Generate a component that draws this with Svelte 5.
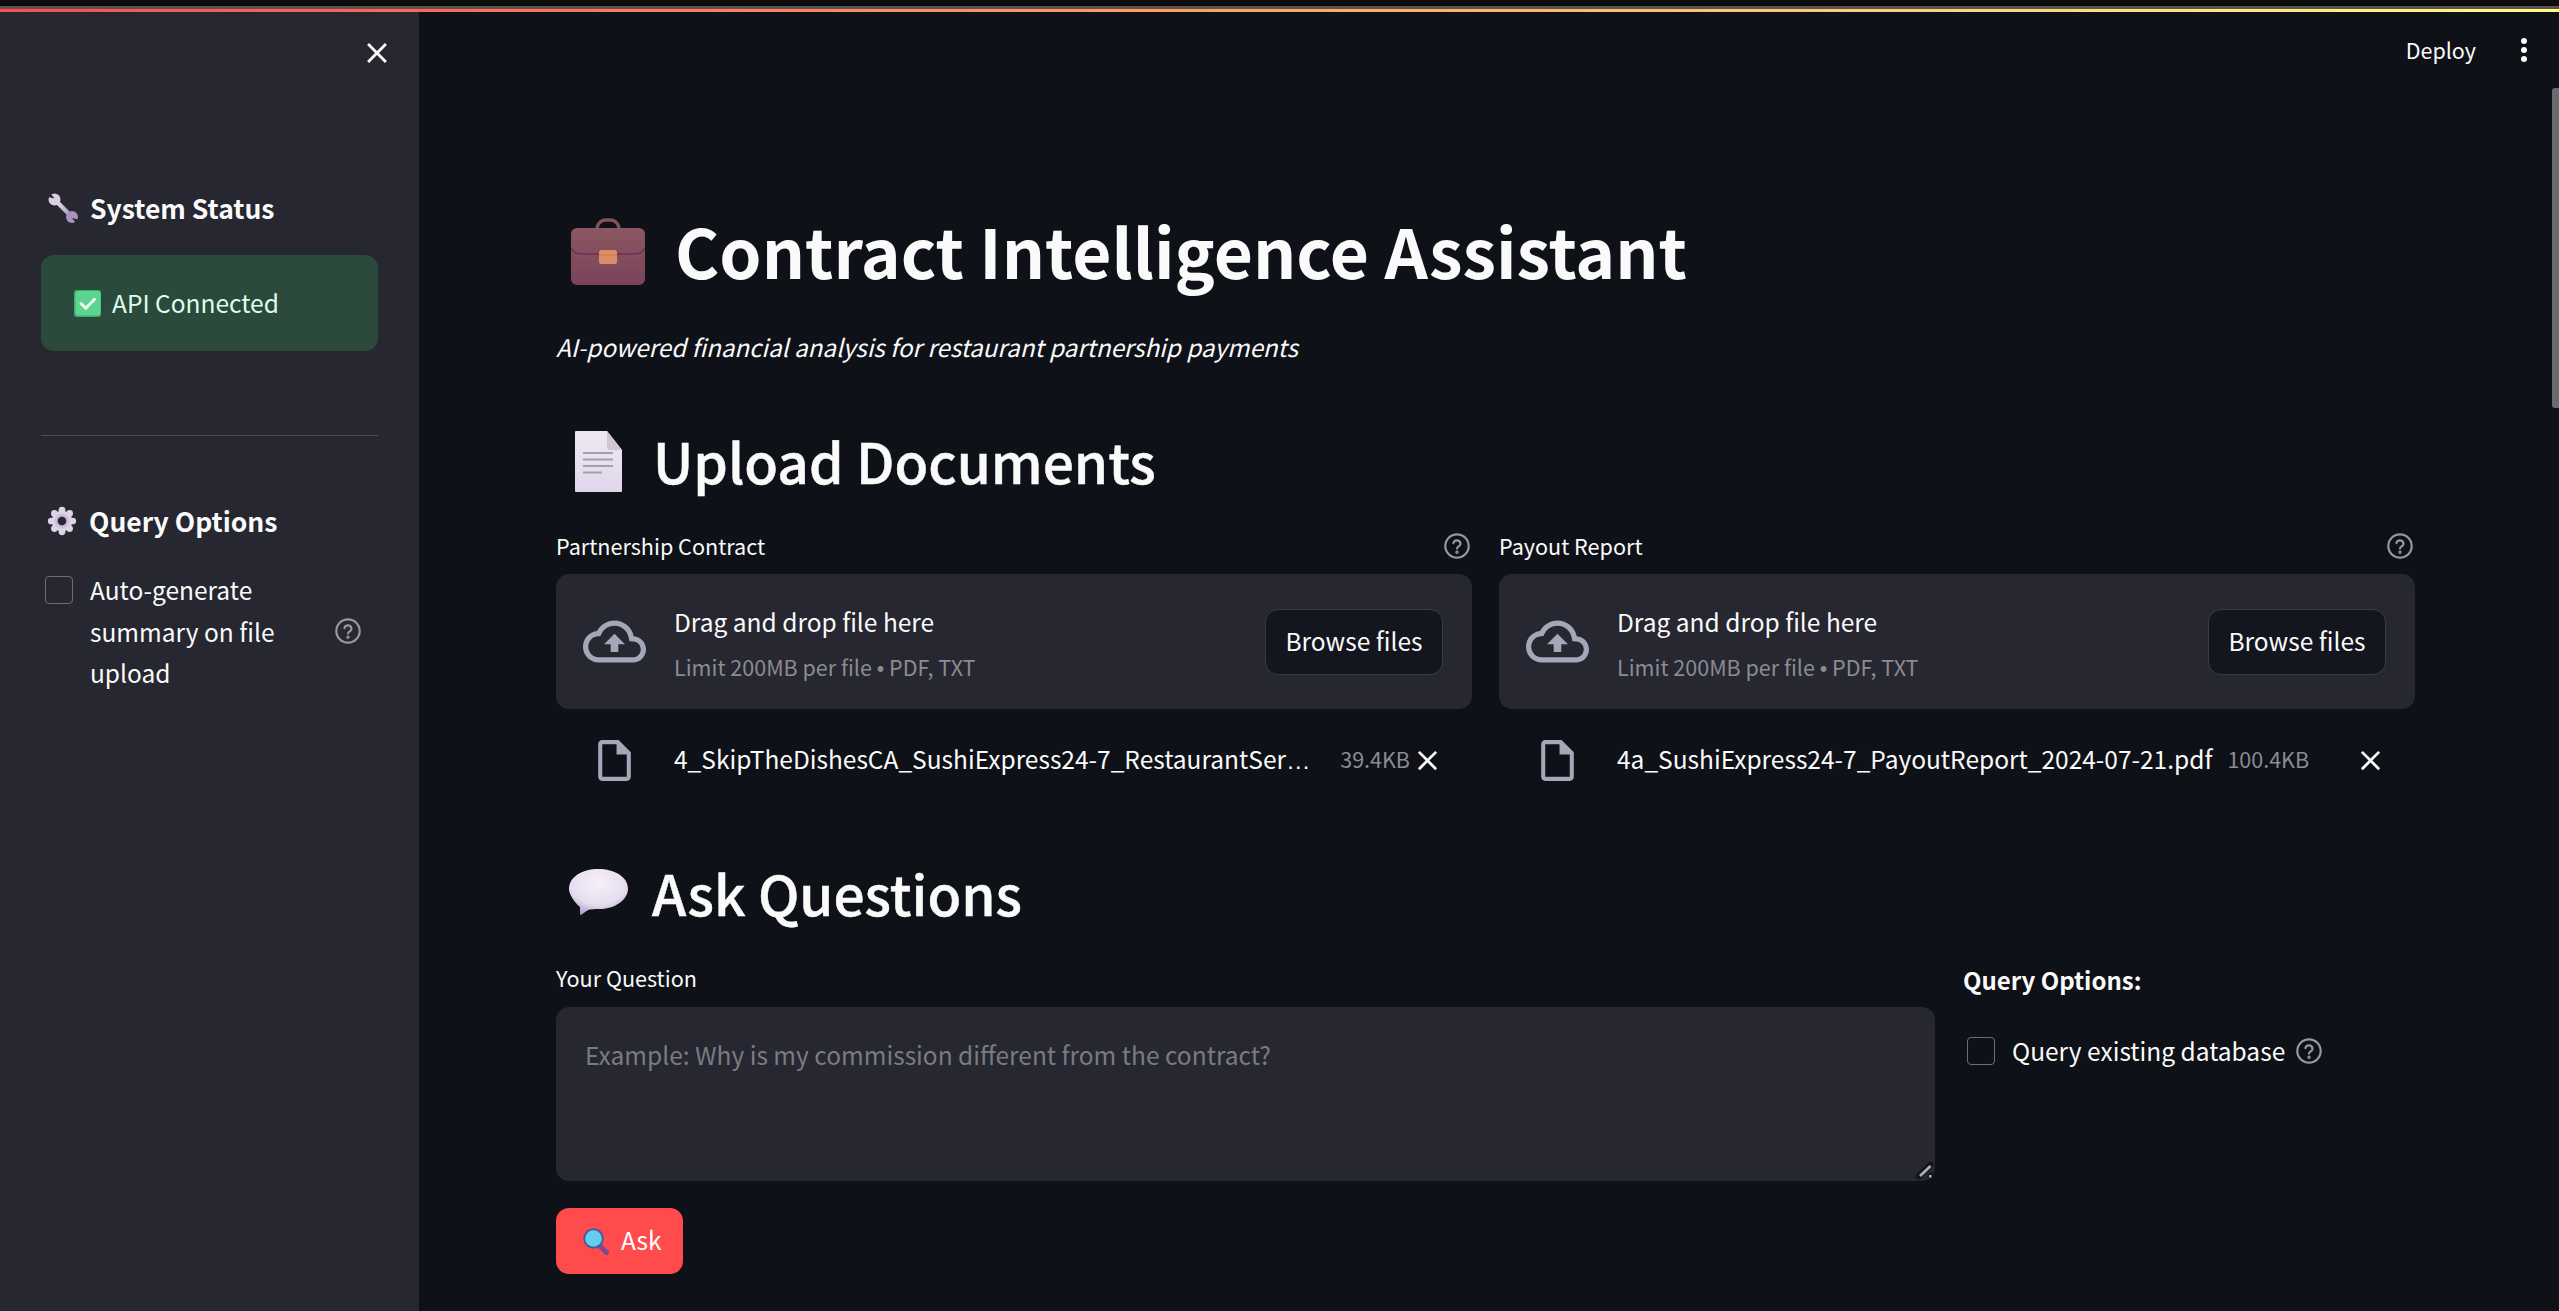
<script>
  const uploads = [
    { label: 'Partnership Contract', file: '4_SkipTheDishesCA_SushiExpress24-7_RestaurantSer', cut: true, size: '39.4KB' },
    { label: 'Payout Report', file: '4a_SushiExpress24-7_PayoutReport_2024-07-21.pdf', cut: false, size: '100.4KB' }
  ];
  const closePath = 'M19 6.41L17.59 5 12 10.59 6.41 5 5 6.41 10.59 12 5 17.59 6.41 19 12 13.41 17.59 19 19 17.59 13.41 12z';
  const cloudPath = 'M19.35 10.04C18.67 6.59 15.64 4 12 4 9.11 4 6.6 5.64 5.35 8.04 2.34 8.36 0 10.91 0 14c0 3.31 2.69 6 6 6h13c2.76 0 5-2.24 5-5 0-2.64-2.05-4.78-4.65-4.96zM19 18H6c-2.21 0-4-1.79-4-4 0-2.05 1.53-3.76 3.56-3.97l1.07-.11.5-.95C8.08 7.14 9.94 6 12 6c2.62 0 4.88 1.86 5.39 4.43l.3 1.5 1.53.11c1.56.1 2.78 1.41 2.78 2.96 0 1.65-1.35 3-3 3zM8 13h2.55v3h2.9v-3H16l-4-4z';
  const filePath = 'M14 2H6c-1.1 0-1.99.9-1.99 2L4 20c0 1.1.89 2 1.99 2H18c1.1 0 2-.9 2-2V8l-6-6zM6 20V4h7v5h5v11H6z';
</script>

{#snippet help()}
  <svg class="help" viewBox="0 0 24 24" fill="none" stroke="currentColor" stroke-width="2" stroke-linecap="round">
    <circle cx="12" cy="12" r="10.800" />
    <path d="M8.700 9.300a3.300 3.300 0 0 1 6.500.8c0 2.100-3.200 2.500-3.200 4.300" />
    <circle cx="12" cy="17.800" r="0.600" />
  </svg>
{/snippet}

<div class="page">
  <div class="strip"></div>
  <div class="deco"></div>
  <div class="layout">
    <aside class="sidebar">
      <div class="close-row">
        <svg class="close" viewBox="0 0 24 24"><path d={closePath} /></svg>
      </div>

      <div class="side-heading status-heading">
        <svg class="side-emoji" viewBox="0 0 30 30">
          <defs>
            <linearGradient id="wr" x1="0" y1="0" x2="1" y2="1">
              <stop offset="0" stop-color="#efe8f4" />
              <stop offset="1" stop-color="#a892bd" />
            </linearGradient>
          </defs>
          <path d="M7 7l16 16" stroke="url(#wr)" stroke-width="4.500" fill="none" />
          <circle cx="6.500" cy="6.500" r="6" fill="#d9cfe4" />
          <circle cx="24" cy="24" r="6" fill="#a892bd" />
          <path d="M6.500 5.500L1.500-1-2 3.500z" fill="#262730" />
          <path d="M24 25l5 6.500 3.500-4.500z" fill="#262730" />
        </svg>
        <span>System Status</span>
      </div>

      <div class="alert">
        <svg class="check" viewBox="0 0 27 27">
          <rect width="27" height="27" rx="3" fill="#3fae72" />
          <rect x="1.500" y="1" width="25" height="24.500" rx="2.500" fill="#5bd590" />
          <path d="M7 13.500l4.800 4.800 8.700-9" fill="none" stroke="#f4fbf6" stroke-width="3" stroke-linecap="round" stroke-linejoin="round" />
        </svg>
        <span>API Connected</span>
      </div>

      <hr class="rule" />

      <div class="side-heading query-heading">
        <svg class="side-emoji" viewBox="0 0 32 32">
          <defs>
            <radialGradient id="gr" cx="0.5" cy="0.5" r="0.6">
              <stop offset="0" stop-color="#6f5d8c" />
              <stop offset="0.55" stop-color="#c9bcd9" />
              <stop offset="1" stop-color="#e9e2f0" />
            </radialGradient>
          </defs>
          <g fill="#ddd4e6">
            <circle cx="16" cy="4.500" r="3.600" />
            <circle cx="16" cy="27.500" r="3.600" />
            <circle cx="4.500" cy="16" r="3.600" />
            <circle cx="27.500" cy="16" r="3.600" />
            <circle cx="7.900" cy="7.900" r="3.600" />
            <circle cx="24.100" cy="7.900" r="3.600" />
            <circle cx="7.900" cy="24.100" r="3.600" />
            <circle cx="24.100" cy="24.100" r="3.600" />
            <circle cx="16" cy="16" r="11" />
          </g>
          <circle cx="16" cy="16" r="9" fill="url(#gr)" />
          <circle cx="16" cy="16" r="4.500" fill="#262730" />
        </svg>
        <span>Query Options</span>
      </div>

      <div class="side-check">
        <span class="box"></span>
        <span class="side-label">Auto-generate summary on file upload</span>
        {@render help()}
      </div>
    </aside>

    <main class="main">
      <div class="toolbar">
        <span class="deploy">Deploy</span>
        <svg class="kebab" viewBox="0 0 8 26" fill="#fafafa">
          <circle cx="4" cy="4" r="3" />
          <circle cx="4" cy="13" r="3" />
          <circle cx="4" cy="22" r="3" />
        </svg>
      </div>

      <div class="scrollbar"></div>

      <div class="content">
        <h1>
          <svg class="brief" viewBox="0 0 74 67">
            <defs>
              <linearGradient id="bc" x1="0" y1="0" x2="0" y2="1">
                <stop offset="0" stop-color="#8a5762" />
                <stop offset="1" stop-color="#7a4358" />
              </linearGradient>
            </defs>
            <path d="M26 13V11a9 9 0 0 1 9-9h4a9 9 0 0 1 9 9v2" fill="none" stroke="#835058" stroke-width="3.500" />
            <rect y="10" width="74" height="57" rx="6" fill="url(#bc)" />
            <path d="M0 30c2 4 5 6 10 6h54c5 0 8-2 10-6" fill="none" stroke="#64355a" stroke-width="1.500" />
            <rect x="28" y="32" width="18" height="14" rx="2.500" fill="#df8d66" />
            <path d="M28 37h18" stroke="#c47552" stroke-width="0.800" />
          </svg>
          <span>Contract Intelligence Assistant</span>
        </h1>

        <p class="tagline">AI-powered financial analysis for restaurant partnership payments</p>

        <h2 class="upload-title">
          <svg class="doc" viewBox="0 0 47 61">
            <defs>
              <linearGradient id="dc" x1="0" y1="0" x2="0" y2="1">
                <stop offset="0" stop-color="#efe8f3" />
                <stop offset="1" stop-color="#e0d6ec" />
              </linearGradient>
            </defs>
            <path d="M1 0h31l15 19v41a1 1 0 0 1-1 1H1a1 1 0 0 1-1-1V1a1 1 0 0 1 1-1z" fill="url(#dc)" />
            <path d="M32 0l15 19H35a3 3 0 0 1-3-3z" fill="#cfc6d8" />
            <g fill="#a69eae">
              <rect x="8" y="21" width="30" height="2" />
              <rect x="8" y="27.500" width="30" height="2" />
              <rect x="8" y="34" width="30" height="2" />
              <rect x="8" y="40.500" width="19" height="2" />
            </g>
          </svg>
          <span>Upload Documents</span>
        </h2>

        <div class="uploads">
          {#each uploads as u}
            <section class="uploader">
              <div class="field-label">
                <span>{u.label}</span>
                {@render help()}
              </div>
              <div class="dropzone">
                <svg class="cloud" viewBox="0 0 24 24"><path d={cloudPath} /></svg>
                <div class="drop-text">
                  <div class="drop-main">Drag and drop file here</div>
                  <div class="drop-sub">Limit 200MB per file <span class="latin">•</span> PDF, TXT</div>
                </div>
                <button class="browse">Browse files</button>
              </div>
              <div class="file-row">
                <svg class="file-icon" viewBox="0 0 24 24"><path d={filePath} /></svg>
                <div class="file-meta">
                  <span class="file-name" class:cut={u.cut}>{u.file}{#if u.cut}<span class="latin">…</span>{/if}</span>
                  <span class="file-size">{u.size}</span>
                </div>
                <svg class="file-x" viewBox="0 0 24 24"><path d={closePath} /></svg>
              </div>
            </section>
          {/each}
        </div>

        <h2 class="ask-title">
          <svg class="bubble" viewBox="0 0 59 46">
            <defs>
              <radialGradient id="bb" cx="0.5" cy="0.3" r="0.8">
                <stop offset="0" stop-color="#f6f1f8" />
                <stop offset="0.6" stop-color="#e6dcef" />
                <stop offset="1" stop-color="#9f87c4" />
              </radialGradient>
            </defs>
            <path d="M29 0c17 0 30 8 30 20 0 10-12 20-28 20-5 0-9 0-12 1l-7 5c-1 0-1-1-1-2v-6C5 33 0 25 0 20 0 8 13 0 29 0z" fill="url(#bb)" />
          </svg>
          <span>Ask Questions</span>
        </h2>

        <div class="ask-row">
          <div class="ask-left">
            <div class="field-label"><span>Your Question</span></div>
            <div class="input-wrap">
              <textarea placeholder="Example: Why is my commission different from the contract?"></textarea>
              <svg class="grip" viewBox="0 0 20 20">
                <path d="M3.500 15.500L15.500 3.500" stroke="#14151b" stroke-width="6" stroke-linecap="round" />
                <path d="M15 15l1-1" stroke="#14151b" stroke-width="5" stroke-linecap="round" />
                <path d="M5 15L15.500 5" stroke="#b3b3b6" stroke-width="2.500" />
                <rect x="14" y="14" width="2.500" height="2.500" fill="#b3b3b6" />
              </svg>
            </div>
            <button class="ask">
              <svg class="lens" viewBox="0 0 27 27">
                <path d="M16 17l7.500 7.500" stroke="#7a4a92" stroke-width="5" stroke-linecap="round" />
                <circle cx="10.500" cy="10.500" r="9.300" fill="#62cfee" stroke="#4d5a9c" stroke-width="2" />
              </svg>
              <span>Ask</span>
            </button>
          </div>
          <div class="ask-right">
            <div class="opts-title">Query Options:</div>
            <div class="opt">
              <span class="box"></span>
              <span>Query existing database</span>
              {@render help()}
            </div>
          </div>
        </div>
      </div>
    </main>
  </div>
</div>

<style>
  :global(body) {
    margin: 0;
    background: #0e1117;
  }

  .page {
    height: 1311px;
    overflow: hidden;
    display: flex;
    flex-direction: column;
    background: #0e1117;
    color: #fafafa;
    font-family: "Noto Sans CJK SC", "Noto Sans", sans-serif;
  }

  .latin {
    font-family: "Liberation Sans", sans-serif;
  }

  .strip {
    height: 6px;
    background: #0d0d0d;
  }

  .deco {
    height: 6px;
    border-top: 3px solid #555;
    box-sizing: border-box;
    background: linear-gradient(90deg, #ff4b4b, #fffd80);
  }

  .layout {
    flex: 1;
    display: flex;
    min-height: 0;
  }

  .sidebar {
    width: 419px;
    flex: none;
    box-sizing: border-box;
    background: #262730;
    padding: 0 41px;
  }

  .close-row {
    height: 82px;
    display: flex;
    align-items: center;
    justify-content: flex-end;
    margin-right: -16px;
  }

  .close {
    width: 34px;
    height: 34px;
    fill: #fafafa;
  }

  .side-heading {
    display: flex;
    align-items: center;
    height: 40px;
    font-size: 26.500px;
    font-weight: 700;
    line-height: 36px;
  }

  .status-heading {
    margin-top: 94px;
    margin-bottom: 27px;
    padding-left: 7px;
    gap: 12px;
  }

  .query-heading {
    margin-top: 65px;
    margin-bottom: 28px;
    padding-left: 6px;
    gap: 12px;
  }

  .side-emoji {
    width: 30px;
    height: 30px;
    flex: none;
  }

  .alert {
    height: 96px;
    border-radius: 13px;
    background: #2b4a3c;
    color: #dffde9;
    display: flex;
    align-items: center;
    gap: 11px;
    padding-left: 33px;
    font-size: 24.500px;
  }

  .alert span {
    margin-top: -2px;
  }

  .check {
    width: 27px;
    height: 27px;
  }

  .rule {
    margin: 84px 0 0;
    border: none;
    height: 1px;
    background: #4a4b54;
  }

  .side-check {
    display: flex;
    align-items: center;
    font-size: 24.500px;
    line-height: 41.500px;
  }

  .side-check .box {
    align-self: flex-start;
    margin: 7px 17px 0 4px;
  }

  .side-label {
    width: 240px;
  }

  .side-check .help {
    margin-left: 5px;
  }

  .box {
    width: 26px;
    height: 26px;
    flex: none;
    border: 1px solid #6c6d75;
    border-radius: 4px;
  }

  .help {
    width: 26px;
    height: 26px;
    flex: none;
    color: #97989d;
  }

  .main {
    flex: 1;
    min-width: 0;
    position: relative;
  }

  .toolbar {
    height: 76px;
    display: flex;
    align-items: center;
    justify-content: flex-end;
    gap: 44px;
    padding-right: 31px;
    font-size: 21.500px;
  }

  .deploy {
    margin-top: -2px;
  }

  .kebab {
    width: 8px;
    height: 26px;
  }

  .scrollbar {
    position: absolute;
    top: 76px;
    right: 0;
    width: 7px;
    height: 320px;
    border-radius: 3px 0 0 3px;
    background: #6a6b70;
  }

  .content {
    padding: 0 144px 0 137px;
  }

  h1, h2 {
    margin: 0;
    display: flex;
    align-items: center;
  }

  h1 {
    margin-top: 114px;
    padding-left: 15px;
    gap: 30px;
    height: 96px;
    font-size: 67.600px;
    font-weight: 700;
    line-height: 96px;
  }

  .brief {
    width: 74px;
    height: 67px;
    flex: none;
    margin-top: 2px;
  }

  .tagline {
    margin: 29px 0 0;
    font-size: 24.200px;
    font-style: italic;
    line-height: 40px;
  }

  h2 {
    height: 76px;
    font-size: 55px;
    font-weight: 500;
    line-height: 76px;
    -webkit-text-stroke: 0.5px #fafafa;
  }

  .upload-title {
    margin-top: 55px;
    padding-left: 19px;
    gap: 31px;
  }

  .doc {
    width: 47px;
    height: 61px;
    flex: none;
    margin-top: 2px;
  }

  .ask-title {
    margin-top: 64px;
    padding-left: 13px;
    gap: 24px;
  }

  .bubble {
    width: 59px;
    height: 46px;
    flex: none;
  }

  .uploads {
    margin-top: 30px;
    display: grid;
    grid-template-columns: 1fr 1fr;
    gap: 27px;
  }

  .uploader {
    min-width: 0;
  }

  .field-label {
    height: 36px;
    display: flex;
    align-items: center;
    justify-content: space-between;
    font-size: 21.600px;
    line-height: 34px;
  }

  .field-label .help {
    margin-right: 2px;
  }

  .dropzone {
    margin-top: 10px;
    height: 135px;
    box-sizing: border-box;
    border-radius: 13px;
    background: #262730;
    display: flex;
    align-items: center;
    padding: 0 29px 0 27px;
    gap: 28px;
  }

  .cloud {
    width: 63px;
    height: 63px;
    flex: none;
    fill: #a3a8b8;
  }

  .drop-text {
    flex: 1;
    min-width: 0;
  }

  .drop-main {
    font-size: 24.500px;
    line-height: 36px;
    margin-top: 8px;
  }

  .drop-sub {
    margin-top: 9px;
    font-size: 21.500px;
    line-height: 36px;
    color: #8b8c92;
  }

  .browse {
    width: 178px;
    height: 66px;
    flex: none;
    padding: 0 0 3px;
    border: 1px solid #3a3b45;
    border-radius: 13px;
    background: #13161e;
    color: #fafafa;
    font: inherit;
    font-size: 24.500px;
  }

  .file-row {
    margin-top: 21px;
    height: 60px;
    display: flex;
    align-items: center;
    padding: 0 28px 0 34px;
  }

  .file-icon {
    width: 49px;
    height: 49px;
    flex: none;
    fill: #a3a8b8;
    margin-right: 35px;
  }

  .file-meta {
    flex: 1;
    min-width: 0;
    display: flex;
    align-items: center;
    font-size: 24.500px;
    padding-bottom: 3px;
  }

  .file-name {
    white-space: nowrap;
  }

  .file-name.cut {
    flex: 1;
    min-width: 0;
  }

  .file-size {
    flex: none;
    margin-left: 15px;
    padding-right: 1px;
    font-size: 21.500px;
    color: #8b8c92;
  }

  .file-x {
    width: 33px;
    height: 33px;
    flex: none;
    fill: #fafafa;
  }

  .ask-row {
    margin-top: 30px;
    display: flex;
    gap: 28px;
  }

  .ask-left {
    width: 1379px;
    flex: none;
  }

  .input-wrap {
    position: relative;
    margin-top: 11px;
  }

  .grip {
    position: absolute;
    right: 0;
    bottom: 0;
    width: 20px;
    height: 20px;
  }

  textarea {
    display: block;
    width: 100%;
    height: 174px;
    box-sizing: border-box;
    padding: 27px 29px;
    border: none;
    border-radius: 13px;
    outline: none;
    background: #262730;
    color: #fafafa;
    font: inherit;
    font-size: 24.500px;
    line-height: 42px;
    resize: none;
  }

  textarea::placeholder {
    color: #7a7b82;
    opacity: 1;
  }

  .ask {
    margin-top: 27px;
    width: 127px;
    height: 66px;
    display: flex;
    align-items: center;
    gap: 11px;
    padding: 0 0 0 27px;
    border: none;
    border-radius: 13px;
    background: #ff4b4b;
    color: #fff;
    font: inherit;
    font-size: 24.500px;
  }

  .ask span {
    margin-top: -3px;
  }

  .lens {
    width: 27px;
    height: 27px;
    flex: none;
  }

  .ask-right {
    flex: 1;
    min-width: 0;
  }

  .opts-title {
    margin-top: 3px;
    font-size: 24px;
    font-weight: 700;
    line-height: 34px;
  }

  .opt {
    margin-top: 37px;
    display: flex;
    align-items: center;
    padding-left: 4px;
    font-size: 24.500px;
    line-height: 34px;
  }

  .opt .box {
    margin-right: 17px;
  }

  .opt .help {
    margin-left: 11px;
  }
</style>
